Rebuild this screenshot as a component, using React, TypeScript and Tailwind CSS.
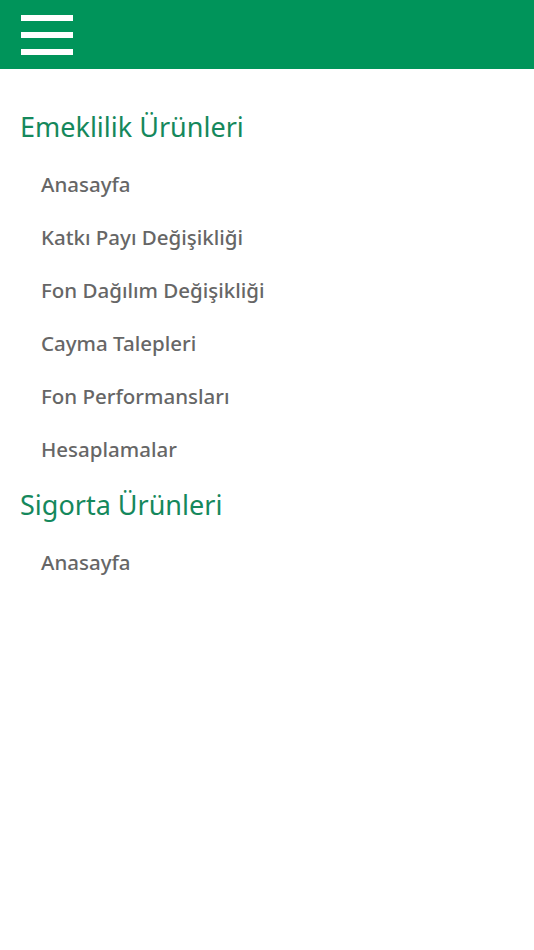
const sections = [
  {
    title: "Emeklilik Ürünleri",
    items: [
      "Anasayfa",
      "Katkı Payı Değişikliği",
      "Fon Dağılım Değişikliği",
      "Cayma Talepleri",
      "Fon Performansları",
      "Hesaplamalar",
    ],
  },
  {
    title: "Sigorta Ürünleri",
    items: ["Anasayfa"],
  },
];

export default function App() {
  return (
    <div className="min-h-[950px] bg-white font-['Noto_Sans',sans-serif]">
      <header className="h-[69px] bg-[#00945a] flex items-center px-[21px]">
        <button className="flex flex-col gap-[11px]">
          <span className="block w-[52px] h-[6px] bg-white" />
          <span className="block w-[52px] h-[6px] bg-white" />
          <span className="block w-[52px] h-[6px] bg-white" />
        </button>
      </header>

      <nav className="pt-[39px] px-[20px]">
        {sections.map((s) => (
          <div key={s.title}>
            <h2 className="text-[27px] leading-[36px] text-[#15885c] py-[1px]">
              {s.title}
            </h2>
            <ul className="pt-[22px]">
              {s.items.map((item) => (
                <li
                  key={item}
                  className="pl-[21px] text-[20.5px] font-medium leading-[28px] text-[#666] h-[53px] pt-[2px]"
                >
                  {item}
                </li>
              ))}
            </ul>
          </div>
        ))}
      </nav>
    </div>
  );
}
